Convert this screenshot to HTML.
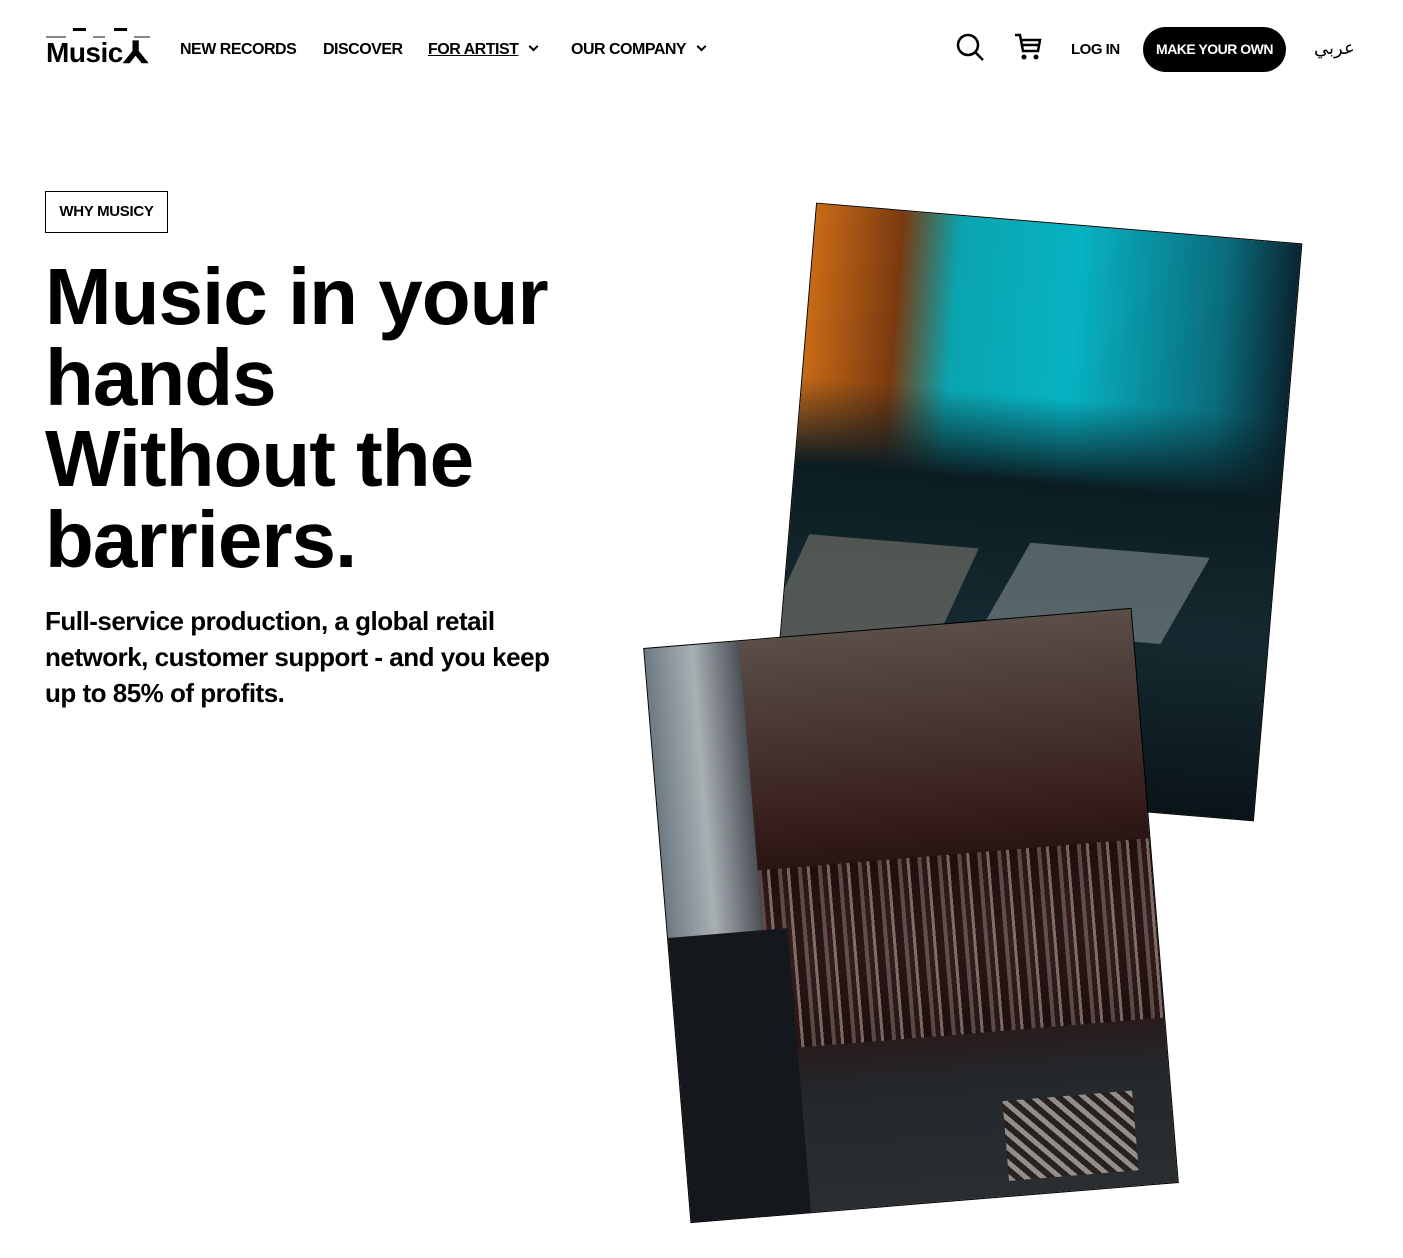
<!DOCTYPE html>
<html><head><meta charset="utf-8"><style>
*{margin:0;padding:0;box-sizing:border-box}
body{width:1403px;height:1258px;background:#fff;font-family:"Liberation Sans","Noto Sans CJK SC",sans-serif;color:#000;position:relative;overflow:hidden}
.nav{position:absolute;top:41px;font-size:16px;font-weight:bold;letter-spacing:-0.5px}
.chev{display:inline-block;width:7px;height:7px;border-right:2px solid #000;border-bottom:2px solid #000;transform:rotate(45deg);margin-left:12px;position:relative;top:-4px}
.img{position:absolute;border:1.5px solid #000;overflow:hidden}
</style></head><body>
<div style="position:absolute;left:46px;top:26px;width:104px;height:14px">
<div style="position:absolute;left:0;top:10px;width:20px;height:2px;background:#888"></div>
<div style="position:absolute;left:27px;top:2px;width:13px;height:3px;background:#000"></div>
<div style="position:absolute;left:47px;top:10px;width:12px;height:2px;background:#888"></div>
<div style="position:absolute;left:68px;top:2px;width:13px;height:3px;background:#000"></div>
<div style="position:absolute;left:88px;top:10px;width:16px;height:2px;background:#888"></div>
</div>
<div style="position:absolute;left:46px;top:36px;font-size:28px;font-weight:bold;letter-spacing:-0.5px">Music<span style="display:inline-block;transform:scaleX(1.2);-webkit-text-stroke:1.5px #000;margin-left:4px">⅄</span></div>
<div class="nav" style="left:180px">NEW RECORDS</div>
<div class="nav" style="left:323px">DISCOVER</div>
<div class="nav" style="left:428px"><span style="text-decoration:underline">FOR ARTIST</span><span class="chev"></span></div>
<div class="nav" style="left:571px">OUR COMPANY<span class="chev"></span></div>
<svg style="position:absolute;left:955px;top:32px" width="30" height="30" viewBox="0 0 30 30"><circle cx="13" cy="13" r="10" fill="none" stroke="#000" stroke-width="2.5"/><line x1="20" y1="20" x2="28" y2="28" stroke="#000" stroke-width="2.5"/></svg>
<svg style="position:absolute;left:1013px;top:32px" width="30" height="30" viewBox="0 0 30 30"><path d="M2 3h5l3 16h15l2-11H9" fill="none" stroke="#000" stroke-width="2.5"/><line x1="8" y1="13" x2="26" y2="13" stroke="#000" stroke-width="2.5"/><circle cx="11" cy="25" r="2.5"/><circle cx="23" cy="25" r="2.5"/></svg>
<div class="nav" style="left:1071px;font-size:15px">LOG IN</div>
<div style="position:absolute;left:1143px;top:27px;width:143px;height:45px;border-radius:23px;background:#000;color:#fff;font-weight:bold;font-size:14px;letter-spacing:-0.5px;line-height:45px;text-align:center">MAKE YOUR OWN</div>
<div style="position:absolute;left:1314px;top:38px;font-size:18px;font-family:'DejaVu Sans',sans-serif">عربي</div>

<div style="position:absolute;left:45px;top:191px;width:123px;height:42px;border:1px solid #000;font-size:15px;font-weight:bold;line-height:40px;text-align:center;letter-spacing:-0.3px">WHY MUSICY</div>
<div style="position:absolute;left:45px;top:256px;font-size:80px;font-weight:bold;line-height:81px;letter-spacing:-1px">Music in your<br>hands<br>Without the<br>barriers.</div>
<div style="position:absolute;left:45px;top:603px;width:570px;font-size:26px;font-weight:bold;line-height:36px;letter-spacing:-0.5px">Full-service production, a global retail<br>network, customer support - and you keep<br>up to 85% of profits.</div>

<div class="img" style="left:791px;top:222px;width:488px;height:580px;transform:rotate(4.8deg);background:linear-gradient(180deg,rgba(0,0,0,0) 0%,rgba(0,0,0,0) 30%,#0b1c22 45%,#152a30 70%,#0a1418 100%),linear-gradient(90deg,#c96a16 0%,#7a3a10 18%,#0aa4b0 30%,#07b2c2 55%,#0a6c7c 85%,#0a2530 100%)">
<div style="position:absolute;left:0;top:330px;width:170px;height:110px;background:#6c6c64;transform:skewX(-20deg);opacity:.7"></div>
<div style="position:absolute;left:220px;top:320px;width:180px;height:90px;background:#99a2a4;transform:skewX(-25deg);opacity:.5"></div>
</div>
<div class="img" style="left:666px;top:627px;width:490px;height:577px;transform:rotate(-4.7deg);background:linear-gradient(180deg,#5a4e48 0%,#3a2220 30%,#2a1414 40%,#4a3030 55%,#2a1a1a 70%,#23282c 80%,#2a2e30 100%)">
<div style="position:absolute;left:0;top:0;width:95px;height:300px;background:linear-gradient(90deg,#6e7a83,#a9b0b4,#4a5056)"></div>
<div style="position:absolute;left:95px;top:230px;width:395px;height:180px;background:repeating-linear-gradient(90deg,#6e5c58 0 4px,#2a1414 4px 9px,#9a8880 9px 12px,#1a0c0c 12px 20px);opacity:.7"></div>
<div style="position:absolute;left:0;top:290px;width:120px;height:287px;background:#14181c"></div>
<div style="position:absolute;left:320px;top:480px;width:130px;height:80px;background:repeating-linear-gradient(45deg,#d8d0c8 0 5px,#2a1a14 5px 11px);opacity:.6"></div>
</div>
</body></html>
